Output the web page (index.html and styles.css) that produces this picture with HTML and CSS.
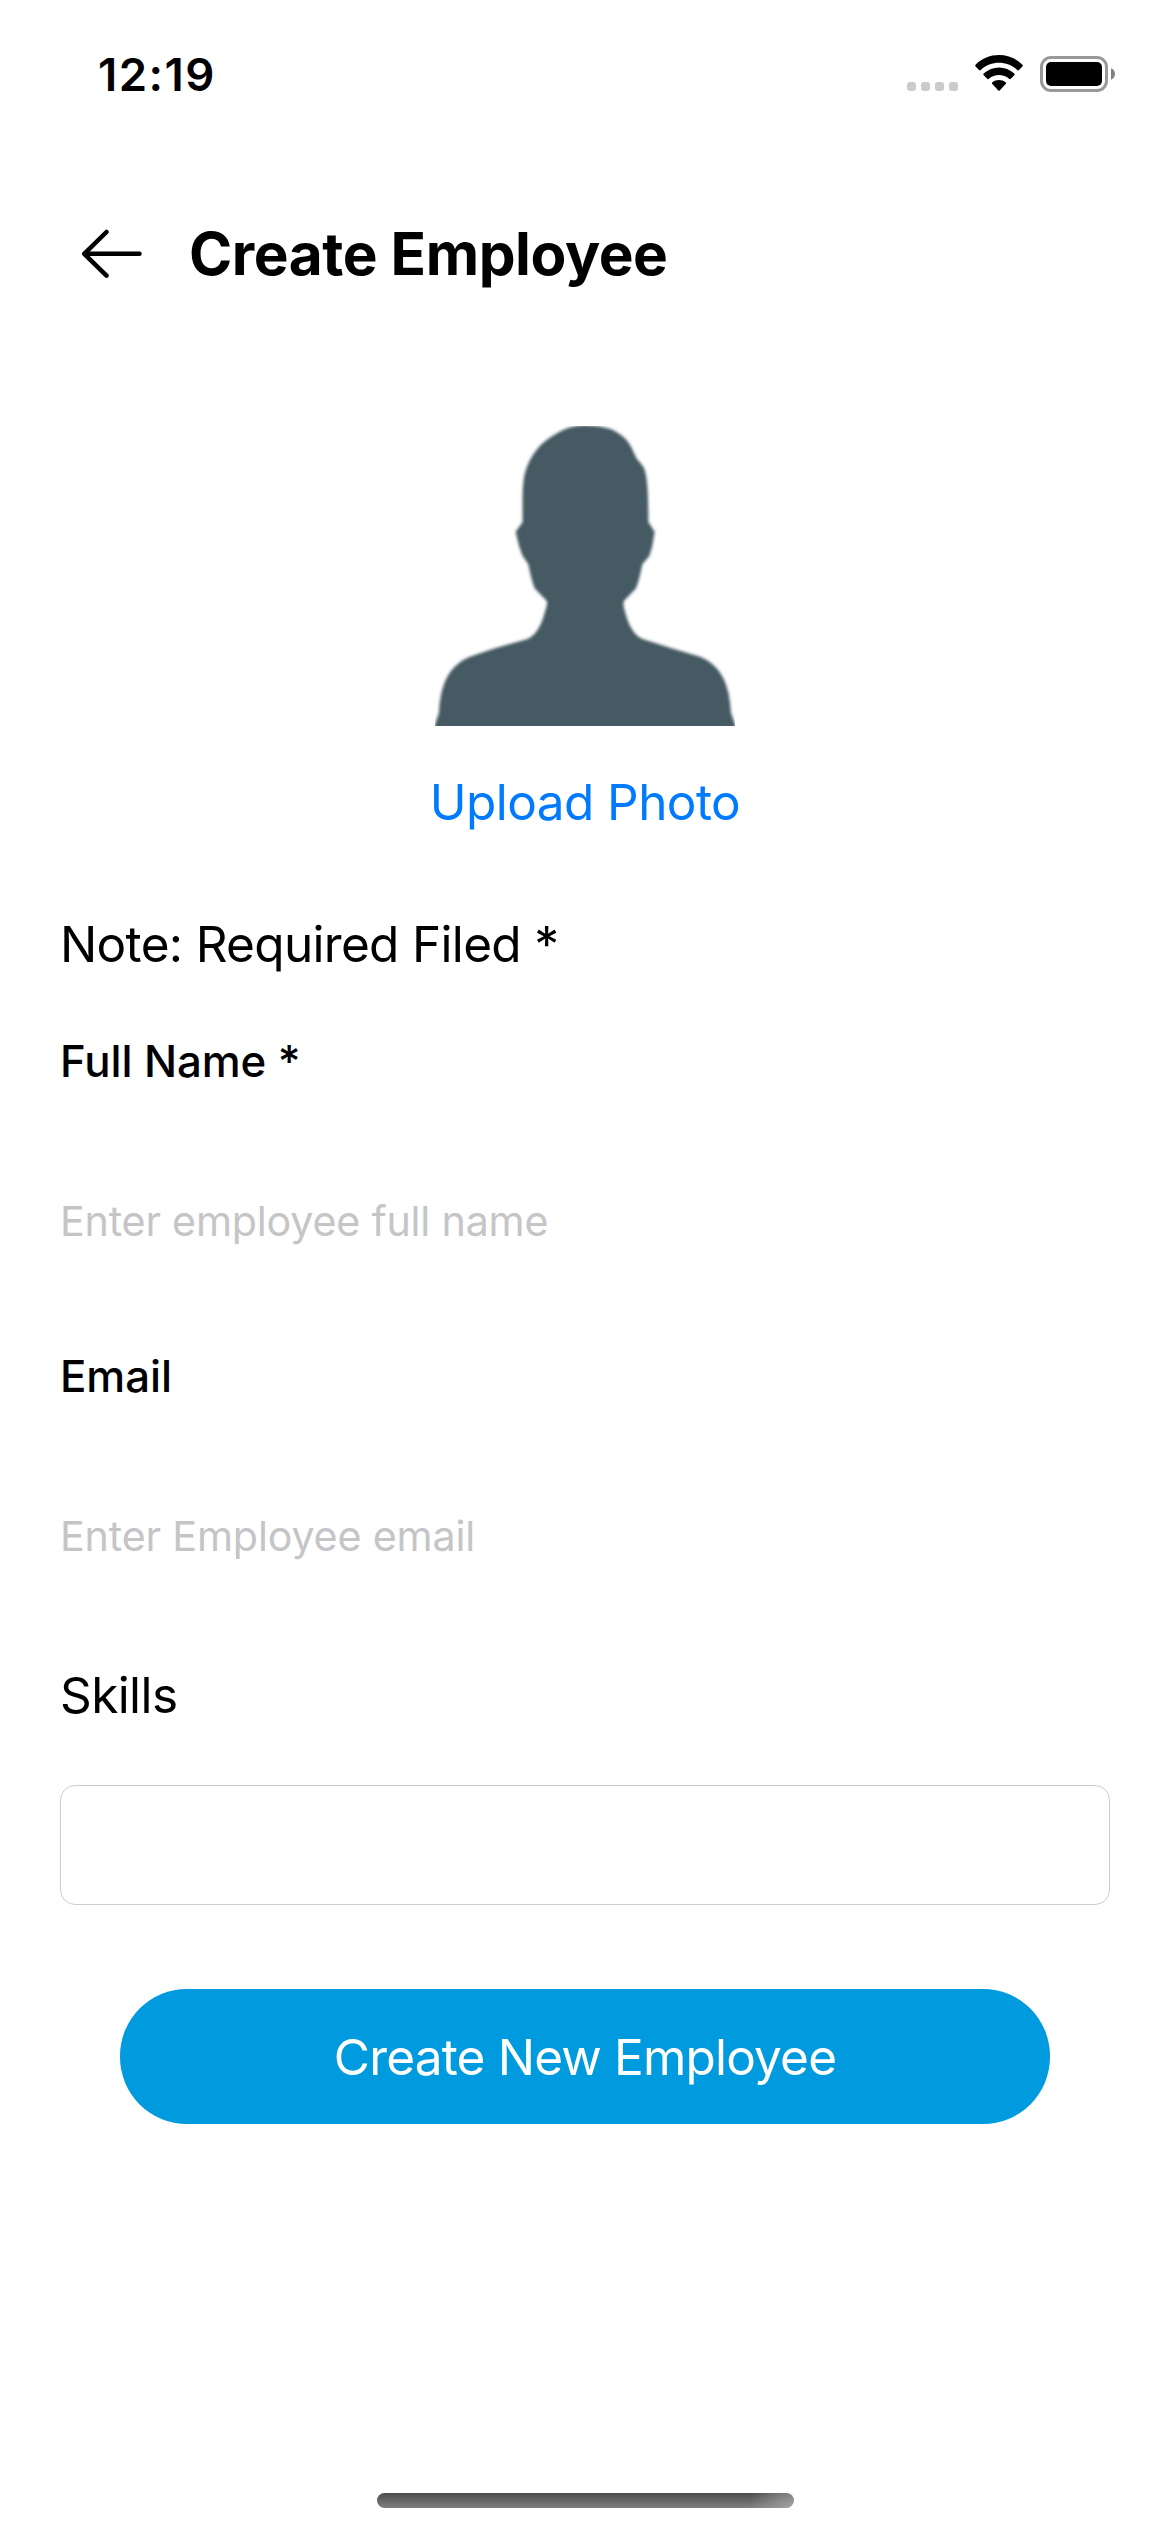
FILE: index.html
```html
<!DOCTYPE html>
<html lang="en">
<head>
<meta charset="utf-8">
<title>Create Employee</title>
<link rel="stylesheet" href="styles.css">
</head>
<body>
<div class="status-bar">
  <span class="time">12:19</span>
  <div class="indicators">
    <svg class="signal" viewBox="0 0 51 36" fill="#cbcbcb">
      <rect x="0" y="27" width="9" height="9" rx="3"/>
      <rect x="14" y="27" width="9" height="9" rx="3"/>
      <rect x="28" y="27" width="9" height="9" rx="3"/>
      <rect x="42" y="27" width="9" height="9" rx="3"/>
    </svg>
    <svg class="wifi" viewBox="0 0 48 36">
      <path d="M0.6 11.4a1.2 1.2 0 0 1 0-1.7C13.500-3.100 34.500-3.100 47.400 9.700a1.200 1.200 0 0 1 0 1.700L44 15a1.200 1.200 0 0 1-1.700 0C32 5.300 16 5.300 5.700 15a1.200 1.200 0 0 1-1.700 0z"/>
      <path d="M8.700 20.300a1.200 1.200 0 0 1 0-1.700C17.300 10.600 30.700 10.600 39.300 18.600a1.200 1.200 0 0 1 0 1.700L35.800 23.700a1.200 1.200 0 0 1-1.700 0C28.300 18.700 19.700 18.700 13.900 23.700a1.200 1.200 0 0 1-1.700 0z"/>
      <path d="M17.300 29a1.200 1.200 0 0 1 .1-1.700C21.200 24.200 26.800 24.200 30.600 27.300a1.200 1.200 0 0 1 .1 1.700L24.900 35.300a1.200 1.200 0 0 1-1.800 0z"/>
    </svg>
    <svg class="battery" viewBox="0 0 75 36">
      <rect x="1.500" y="1.500" width="65" height="33" rx="9.500" fill="none" stroke="#999" stroke-width="3"/>
      <rect x="6" y="6" width="56" height="24" rx="5"/>
      <path d="M71 12.200c2.500 1 4 3.200 4 5.800s-1.500 4.800-4 5.800z" fill="#808080"/>
    </svg>
  </div>
</div>

<header class="header">
  <svg class="back" viewBox="0 0 62 50" fill="none" stroke="#000" stroke-width="4.500" stroke-linecap="round" stroke-linejoin="round">
    <path d="M25.500 3 3.200 24.800 25.500 46.600M3.200 24.800H58.500"/>
  </svg>
  <h1 class="title">Create Employee</h1>
</header>

<main class="form">
  <div class="photo">
    <svg class="avatar" viewBox="0 0 900 900">
      <defs><filter id="soft"><feGaussianBlur stdDeviation="5"/></filter></defs>
      <path filter="url(#soft)" fill="#455a64" d="M384 12Q408 0 450-2Q500 0 528 10C555 22 580 42 590 66L604 96L626 124C638 152 640 200 640 288L659 317L652 360L643 390L622 415Q612 468 602 488L566 526Q564 542 571 560C582 602 598 628 625 640L700 664L795 692C868 722 884 790 888 860L905 910H-5L12 860C16 790 32 722 105 692L175 668L275 640C302 628 318 602 329 560Q337 542 336 526L300 488Q290 468 280 415L263 390L252 360L242 317L263 288C262 200 262 155 276 122Q290 85 320 54Q345 32 384 12z"/>
    </svg>
    <a class="upload">Upload Photo</a>
  </div>

  <p class="text note">Note: Required Filed *</p>

  <label class="label name-label" for="name">Full Name *</label>
  <input class="input" id="name" type="text" placeholder="Enter employee full name">

  <label class="label email-label" for="email">Email</label>
  <input class="input email" id="email" type="text" placeholder="Enter Employee email">

  <p class="text skills-label">Skills</p>
  <div class="skills-box"></div>

  <button class="submit" type="button">Create New Employee</button>
</main>

<div class="home-indicator"></div>
</body>
</html>
```
FILE: styles.css
```css
* {
  box-sizing: border-box;
}

body {
  margin: 0;
  width: 1170px;
  height: 2532px;
  display: flex;
  flex-direction: column;
  background: #fff;
  color: #000;
  font-family: Inter, "Liberation Sans", sans-serif;
  overflow: hidden;
}

.status-bar {
  display: flex;
  justify-content: space-between;
  align-items: flex-start;
  height: 141px;
  padding: 45px 55px 0 98px;
}

.time {
  font-size: 45.5px;
  font-weight: 600;
  line-height: 60px;
  letter-spacing: 1.5px;
}

.indicators {
  display: flex;
  padding-top: 10px;
}

.signal {
  width: 51px;
  height: 36px;
}

.wifi {
  width: 48px;
  height: 36px;
  margin-left: 17px;
}

.battery {
  width: 75px;
  height: 36px;
  margin: 1px 0 0 17px;
}

.header {
  display: flex;
  align-items: center;
  height: 72px;
  margin-top: 77px;
  padding-left: 81px;
}

.back {
  width: 62px;
  height: 50px;
}

.title {
  margin: 0 0 0 46px;
  font-size: 58.5px;
  font-weight: 700;
  line-height: 72px;
  letter-spacing: -0.43px;
}

.form {
  display: flex;
  flex-direction: column;
  padding: 136px 60px 0;
}

.photo {
  display: flex;
  flex-direction: column;
  align-items: center;
}

.avatar {
  width: 300px;
  height: 300px;
  overflow: hidden;
}

.upload {
  margin-top: 46px;
  font-size: 49.5px;
  line-height: 60px;
  letter-spacing: -0.58px;
  color: #007aff;
}

.text {
  margin: 0;
  font-size: 49.5px;
  line-height: 60px;
}

.note {
  margin-top: 82px;
  letter-spacing: -0.68px;
}

.label {
  font-size: 43.8px;
  font-weight: 500;
  line-height: 60px;
  letter-spacing: -0.1px;
}

.name-label {
  margin-top: 58px;
}

.input {
  height: 150px;
  margin-top: 54px;
  padding: 0;
  border: 0;
  outline: 0;
  background: none;
  font-family: inherit;
  font-size: 41.2px;
  letter-spacing: -0.2px;
}

.input.email {
  letter-spacing: -0.16px;
}

.input::placeholder {
  color: #c5c5c7;
  opacity: 1;
}

.email-label {
  margin-top: 51px;
  letter-spacing: -0.05px;
}

.skills-label {
  margin-top: 54px;
  letter-spacing: -0.6px;
}

.skills-box {
  height: 120px;
  margin-top: 60px;
  border: 1px solid #ccc;
  border-radius: 15px;
}

.submit {
  height: 135px;
  margin: 84px 60px 0;
  padding: 0;
  border: 0;
  border-radius: 67px;
  background: #009bdf;
  color: #fff;
  font-family: inherit;
  font-size: 49.5px;
  letter-spacing: -0.82px;
}

.home-indicator {
  width: 417px;
  height: 15px;
  margin: auto auto 24px 377px;
  border-radius: 8px;
  background:
    radial-gradient(circle at 100% 100%, rgba(180, 180, 180, 0.7), rgba(180, 180, 180, 0) 45px),
    linear-gradient(#4c4c4c, #7f7f7f);
}
```
